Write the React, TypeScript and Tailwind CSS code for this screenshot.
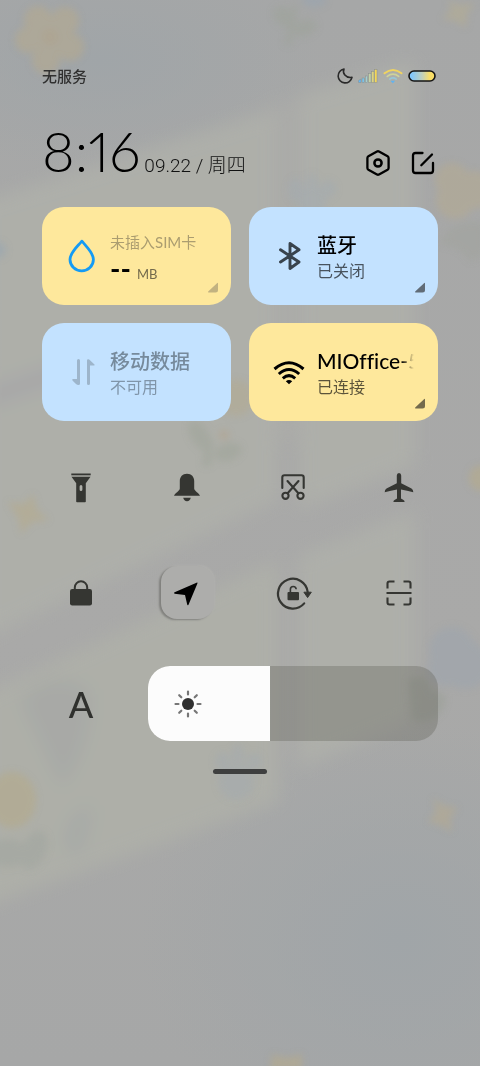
import { useState, type ReactNode } from 'react';
import clsx from 'clsx';

function Wallpaper() {
  return (
    <svg
      className="absolute inset-0 h-full w-full"
      viewBox="0 0 480 1066"
      preserveAspectRatio="xMidYMid slice"
      aria-hidden="true"
    >
      <defs>
        <linearGradient id="wall" x1="0" y1="0" x2="0" y2="1">
          <stop offset="0" stopColor="#a6a7a7" />
          <stop offset="0.6" stopColor="#a9a9a8" />
          <stop offset="1" stopColor="#a6a7a7" />
        </linearGradient>
        <radialGradient id="cool">
          <stop offset="0" stopColor="#a0a5a8" />
          <stop offset="1" stopColor="#a0a5a8" stopOpacity="0" />
        </radialGradient>
        <filter id="soft" x="-20%" y="-20%" width="140%" height="140%">
          <feGaussianBlur stdDeviation="9" />
        </filter>
        <filter id="petal" x="-30%" y="-30%" width="160%" height="160%">
          <feGaussianBlur stdDeviation="3.5" />
        </filter>
      </defs>
      <rect width="480" height="1066" fill="url(#wall)" />
      <ellipse cx="100" cy="60" rx="220" ry="110" fill="url(#cool)" />
      <ellipse cx="400" cy="940" rx="260" ry="220" fill="url(#cool)" />

      {/* window light with the frame's shadow across it */}
      <g filter="url(#soft)" opacity="0.9">
        <path d="M-20 202 L278 108 V500 L-20 640Z" fill="#afb0aa" />
        <path d="M298 95 L415 60 V465 L298 510Z" fill="#afb0aa" />
        <path d="M270 100 H306 V440 H270Z" fill="#adaea9" opacity="0.5" />
        <path d="M-20 695 L278 560 V802 L-20 908Z" fill="#afb0a9" />
        <path d="M298 556 L415 510 V720 L298 768Z" fill="#afb0aa" />
        <path d="M-20 400 L140 345" stroke="#a9a9a9" strokeWidth="22" />
        <path d="M20 700 Q50 665 90 690 Q95 740 62 788Z" fill="#a8aaa6" />
        <path d="M65 850 Q60 815 92 804 Q92 835 78 858Z" fill="#a8aba7" />
      </g>

      <g filter="url(#petal)" opacity="0.8">
        <g fill="#b3aa92" opacity="0.85">
          <circle cx="38" cy="20" r="14" />
          <circle cx="65" cy="21" r="14" />
          <circle cx="70" cy="47" r="14" />
          <circle cx="46" cy="60" r="14" />
          <circle cx="28" cy="40" r="13" />
          <circle cx="50" cy="37" r="14" />
        </g>
        <circle cx="50" cy="37" r="7" fill="#b1a188" opacity="0.6" />
        <g fill="#9fa49b" opacity="0.8">
          <ellipse cx="285" cy="17" rx="13" ry="9" transform="rotate(35 285 17)" />
          <ellipse cx="305" cy="28" rx="12" ry="8" transform="rotate(-20 305 28)" />
          <path d="M293 5h5l-6 40h-8Z" />
        </g>
        <ellipse cx="314" cy="0" rx="12" ry="7" fill="#9ca5ae" />
        <path d="M448 0 L460 5 L475 3 L467 14 L466 28 L456 21 L442 19 L451 10Z" fill="#b0ab98" />
        <g fill="#a4abb1" opacity="0.7">
          <ellipse cx="296" cy="190" rx="8" ry="12" />
          <ellipse cx="312" cy="186" rx="6" ry="12" />
          <ellipse cx="328" cy="189" rx="8" ry="9" />
          <circle cx="312" cy="202" r="14" />
        </g>
        <g fill="#b3aa94" opacity="0.8">
          <circle cx="452" cy="180" r="17" />
          <circle cx="455" cy="200" r="19" />
          <circle cx="474" cy="190" r="19" />
        </g>
        <path d="M470 222 Q445 225 440 245 Q460 245 470 262 L484 255 V222Z" fill="#a0a49c" opacity="0.6" />
        <circle cx="-2" cy="250" r="8" fill="#9da8af" />
        <circle cx="236" cy="398" r="18" fill="#b2a992" opacity="0.7" />
        <g fill="#a1a59c" opacity="0.8">
          <ellipse cx="200" cy="436" rx="9" ry="17" transform="rotate(-32 200 436)" />
          <ellipse cx="228" cy="452" rx="14" ry="9" transform="rotate(-18 228 452)" />
          <path d="M206 440h8l-3 26h-9Z" />
        </g>
        <circle cx="224" cy="435" r="5" fill="#b4a38b" opacity="0.7" />
        <path d="M8 502 L24 504 L33 494 L37 510 L49 520 L32 522 L21 534 L19 520Z" fill="#b3ac94" />
        <circle cx="482" cy="478" r="13" fill="#b2aa92" />
        <g fill="#a0a6ac">
          <circle cx="452" cy="650" r="23" />
          <circle cx="465" cy="665" r="24" />
          <circle cx="446" cy="668" r="18" />
        </g>
        <path d="M408 680 Q426 670 432 692 Q450 690 444 706 Q436 726 412 720Z" fill="#9ca099" opacity="0.8" />
        <g fill="#a5acae" opacity="0.8">
          <ellipse cx="238" cy="756" rx="6" ry="12" />
          <ellipse cx="223" cy="762" rx="8" ry="10" />
          <ellipse cx="254" cy="762" rx="8" ry="9" />
          <circle cx="236" cy="782" r="18" />
        </g>
        <ellipse cx="12" cy="800" rx="24" ry="28" fill="#b2ab92" />
        <g fill="#a4a8a2">
          <ellipse cx="8" cy="853" rx="20" ry="14" />
          <ellipse cx="34" cy="850" rx="12" ry="20" transform="rotate(25 34 850)" />
        </g>
        <path d="M433 798 L443 805 L458 808 L450 818 L452 832 L440 825 L428 822 L436 812Z" fill="#b0a996" />
        <path d="M270 1070 L272 1054 L286 1058 L302 1054 V1070Z" fill="#b1a992" />
      </g>
    </svg>
  );
}

function StatusBar() {
  return (
    <div className="flex h-6 items-center justify-between">
      <span className="text-[15px] font-medium leading-6 text-[#303030]">无服务</span>
      <div className="flex items-center gap-[5px] pr-0.5">
        <svg className="h-4 w-4" viewBox="0 0 16 16" fill="none" aria-label="勿扰">
          <path
            d="M7 1C5.2 5 8.4 10.4 15 9.4A7 7 0 1 1 7 1Z"
            stroke="#2a2a2a"
            strokeWidth="1.6"
            strokeLinejoin="round"
          />
        </svg>
        <svg className="h-4 w-5" viewBox="0 0 20 16" strokeWidth="0.5" stroke="#888d8c" aria-label="信号">
          <path d="M0.5 14.5V12.5L3 11v3.5Z" fill="#64b9f4" />
          <rect x="4" y="10" width="2.4" height="4.5" fill="#7cc2e6" />
          <rect x="7.3" y="8" width="2.4" height="6.5" fill="#a5cdcf" />
          <rect x="10.6" y="5.5" width="2.4" height="9" fill="#c4d3a8" />
          <rect x="13.6" y="3.5" width="2.4" height="11" fill="#dcd482" />
          <rect x="16.6" y="1.5" width="2.4" height="13" fill="#f5d758" />
        </svg>
        <svg className="h-4 w-5" viewBox="0 0 20 16" fill="none" strokeLinecap="round" aria-label="WLAN">
          <path d="M1.5 5.3Q10 -1.5 18.5 5.3" stroke="#f1d45f" strokeWidth="1.9" />
          <path d="M4.3 8.4Q10 4 15.7 8.4" stroke="#cfd39a" strokeWidth="1.7" />
          <path d="M6.8 11.1Q10 8.7 13.2 11.1" stroke="#98c7d6" strokeWidth="1.7" />
          <path d="M8.6 13.2h2.8L10 14.5Z" fill="#5eb4f3" stroke="#5eb4f3" />
        </svg>
        <svg className="h-3 w-7" viewBox="0 0 28 12" aria-label="电量">
          <defs>
            <linearGradient id="battery">
              <stop offset="0.1" stopColor="#82c7fb" />
              <stop offset="0.5" stopColor="#c0d0bd" />
              <stop offset="0.8" stopColor="#f9dd67" />
            </linearGradient>
          </defs>
          <rect x="1" y="1" width="26" height="10" rx="5" fill="url(#battery)" stroke="#151515" strokeWidth="1.6" />
        </svg>
      </div>
    </div>
  );
}

function Header() {
  return (
    <header className="flex items-end justify-between">
      <div className="flex items-baseline gap-1">
        <h1 className="font-[Lato,sans-serif] text-[56px] font-light leading-[54px] text-black proportional-nums">
          8:16
        </h1>
        <span className="text-[19px] font-light leading-6 text-[#111] font-[Roboto,'Noto_Sans_CJK_SC',sans-serif]">
          09.22 / 周四
        </span>
      </div>
      <div className="flex gap-[18px] pb-px text-black">
        <button type="button" aria-label="设置">
          <svg className="h-7 w-7" viewBox="0 0 28 28" fill="none" stroke="currentColor" strokeWidth="2.3">
            <path
              d="M13 2.5Q14 2 15 2.5L23.6 7.3Q24.6 7.9 24.6 9V19Q24.6 20.1 23.6 20.7L15 25.5Q14 26 13 25.5L4.4 20.7Q3.4 20.1 3.4 19V9Q3.4 7.9 4.400 7.300Z"
              strokeLinejoin="round"
            />
            <circle cx="14" cy="14" r="3.6" strokeWidth="2.5" />
          </svg>
        </button>
        <button type="button" aria-label="编辑">
          <svg className="h-7 w-7" viewBox="0 0 28 28" fill="none" stroke="currentColor" strokeWidth="2.3" strokeLinecap="round">
            <path d="M12.500 4H5.500Q3 4 3 6.500V21.500Q3 24 5.500 24H20.500Q23 24 23 21.500V14" />
            <path d="M11.300 16.200L22 5.500" />
          </svg>
        </button>
      </div>
    </header>
  );
}

interface TileProps {
  tone: 'yellow' | 'blue';
  icon: ReactNode;
  children: ReactNode;
  corner?: string;
  disabled?: boolean;
}

function Tile({ tone, icon, children, corner, disabled }: TileProps) {
  return (
    <button
      type="button"
      disabled={disabled}
      className={clsx(
        'relative flex h-[98px] min-w-0 items-center gap-3 rounded-[22px] pl-6 pr-2 text-left',
        tone === 'yellow' ? 'bg-[#fee89c]' : 'bg-[#c3e2ff]',
      )}
    >
      <span className="flex w-8 shrink-0 justify-center">{icon}</span>
      <span className="flex min-w-0 flex-1 flex-col pt-1">{children}</span>
      {corner && (
        <svg className={clsx('absolute bottom-3 right-3 h-3 w-3', corner)} viewBox="0 0 12 12" aria-hidden="true">
          <path d="M1.800 11.500H8.500Q11 11.500 11 9V2.600Q11 1.200 10 2.200L1.200 10.500Q0.500 11.500 1.800 11.500Z" fill="currentColor" />
        </svg>
      )}
    </button>
  );
}

function Tiles() {
  return (
    <div className="grid grid-cols-2 gap-[18px]">
      <Tile
        tone="yellow"
        corner="text-[#c2b280]"
        icon={
          <svg className="h-9 w-8" viewBox="0 0 32 36" fill="none" stroke="#149bf5" strokeWidth="2.8">
            <path d="M15.5 3.5C12 8 4 14.500 4 21.500A11.700 11.400 0 0 0 27.400 21.500C27.400 14.500 19.500 8 16.300 3.500Q15.900 3 15.500 3.500Z" />
          </svg>
        }
      >
        <span className="text-[15px] leading-[26px] whitespace-nowrap text-[#ab9d70]">未插入SIM卡</span>
        <span className="flex items-baseline gap-1.5 leading-[26px]">
          <span className="text-[28px] font-bold text-black">--</span>
          <span className="text-[13px] text-[#736a4c]">MB</span>
        </span>
      </Tile>

      <Tile
        tone="blue"
        corner="text-[#616c77]"
        icon={
          <svg className="h-8 w-8" viewBox="0 0 32 32" fill="none" stroke="#38434d" strokeWidth="2.9" strokeLinejoin="round" strokeLinecap="round">
            <path d="M7.500 9.800L26 22L17 28.500V3.500L26 9.800L7.500 22" />
          </svg>
        }
      >
        <span className="text-[20px] leading-[26px] font-medium text-black">蓝牙</span>
        <span className="text-[16px] leading-[26px] text-[#48535e]">已关闭</span>
      </Tile>

      <Tile
        tone="blue"
        disabled
        icon={
          <svg className="h-8 w-8" viewBox="0 0 32 32" fill="#9db5cb" aria-hidden="true">
            <path d="M11 4.500Q11 3 12.500 3T14 4.500V27.500Q14 29 12.500 29Q11 29 10 28L6.500 24.500Q5.500 23 7 23H11Z" />
            <path d="M24 27.500Q24 29 22.500 29T21 27.500V4.500Q21 3 22.500 3.300Q23.500 3.500 24.500 4.800L28.500 8.500Q29 9.500 28 9.500H24Z" />
          </svg>
        }
      >
        <span className="text-[20px] leading-[26px] font-medium text-[#768a9c]">移动数据</span>
        <span className="text-[16px] leading-[26px] text-[#8095a9]">不可用</span>
      </Tile>

      <Tile
        tone="yellow"
        corner="text-[#736a4c]"
        icon={
          <svg className="h-8 w-8" viewBox="0 0 32 32" fill="none" stroke="#000" strokeWidth="3">
            <path d="M1.500 13Q16 0.500 30.500 13" />
            <path d="M5.800 18Q16 9 26.200 18" />
            <path d="M9.800 22.300Q16 17 22.200 22.300" />
            <path d="M12.800 25.200Q16 22.800 19.200 25.200L16 28.300Z" fill="#000" stroke="none" />
          </svg>
        }
      >
        <span className="w-max whitespace-nowrap text-[21px] leading-[26px] font-medium text-black [font-variant-ligatures:none] mask-[linear-gradient(to_right,#000_82%,transparent_94%)]">
          MIOffice-5
        </span>
        <span className="text-[16px] leading-[26px] text-[#5c543a]">已连接</span>
      </Tile>
    </div>
  );
}

const toggles = [
  {
    label: '手电筒',
    icon: (
      <g fill="currentColor">
        <rect x="8.3" y="3.5" width="19.4" height="1.8" />
        <path
          d="M8.500 6.800H27.500L22.800 13.200V31.500Q22.800 32.300 22 32.300H14Q13.200 32.300 13.200 31.500V13.200ZM18 15Q16.600 15 16.600 16.500V19.500Q16.600 21 18 21T19.400 19.500V16.500Q19.400 15 18 15Z"
          fillRule="evenodd"
        />
      </g>
    ),
  },
  {
    label: '静音',
    icon: (
      <g fill="currentColor">
        <path d="M18 3.700C13.500 3.700 10.800 6.800 10.800 11V18.500C10.800 20.800 5.500 23.500 5 25.800H31C30.500 23.500 25.200 20.800 25.200 18.500V11C25.200 6.800 22.500 3.700 18 3.700Z" />
        <path d="M14.200 27.800H21.800Q21 31.200 18 31.200T14.200 27.800Z" />
      </g>
    ),
  },
  {
    label: '截屏',
    icon: (
      <g fill="none" stroke="currentColor" strokeWidth="2.1" strokeLinecap="round">
        <path d="M7.300 18V7.500Q7.300 5.300 9.500 5.300H26.500Q28.700 5.300 28.700 7.500V18" />
        <path d="M12.500 11L23.400 23.300M23.500 11L12.600 23.300" />
        <circle cx="10.5" cy="25.8" r="3.1" />
        <circle cx="25.5" cy="25.8" r="3.1" />
      </g>
    ),
  },
  {
    label: '飞行模式',
    icon: (
      <path
        d="M18 3Q20.200 3 20.200 5.500V13.200L30.500 18.500Q32.300 19.500 32.300 22.200Q26 20.500 20 19.500V28.500L22.500 30Q23.600 30.600 23.600 32H12.400Q12.400 30.600 13.500 30L16 28.500V19.500Q10 20.500 3.700 22.200Q3.700 19.500 5.500 18.500L15.800 13.200V5.500Q15.800 3 18 3Z"
        fill="currentColor"
      />
    ),
  },
  {
    label: '锁屏',
    icon: (
      <g>
        <rect x="7" y="14" width="22" height="16.5" rx="2.2" fill="currentColor" />
        <path d="M11.800 15V12.500A6.200 6.200 0 0 1 24.200 12.500V15" fill="none" stroke="currentColor" strokeWidth="2" />
      </g>
    ),
  },
  {
    label: '位置',
    active: true,
    icon: (
      <path
        d="M27.500 7.700Q29 7.200 28.300 8.800L19.500 29.700Q18.600 31 18.200 29.500L16 20L5.700 18.800Q4.200 18.100 5.600 17.300Z"
        fill="#000"
      />
    ),
  },
  {
    label: '自动旋转',
    icon: (
      <g fill="none" stroke="currentColor">
        <path d="M29.200 28.400A14.900 14.900 0 1 1 32.700 17" strokeWidth="2.2" strokeLinecap="round" />
        <path d="M28.900 17.200H36.300L32.600 22.600Z" fill="currentColor" strokeLinejoin="round" />
        <rect x="12.5" y="17" width="11.5" height="8.2" rx="1" fill="currentColor" stroke="none" />
        <path d="M15.400 17.500V14.300Q15.400 11.500 18.200 11.500T21.200 14.300" strokeWidth="1.6" />
      </g>
    ),
  },
  {
    label: '扫一扫',
    icon: (
      <path
        d="M6.500 13.500V8.500Q6.500 6.500 8.500 6.500H13.500M22.500 6.500H27.500Q29.500 6.500 29.500 8.500V13.500M29.500 22.500V27.500Q29.500 29.500 27.500 29.500H22.500M13.500 29.500H8.500Q6.500 29.500 6.500 27.500V22.500M5.500 18H30.500"
        fill="none"
        stroke="currentColor"
        strokeWidth="2.1"
      />
    ),
  },
];

function Toggles() {
  return (
    <div className="grid grid-cols-4 gap-x-7 gap-y-[52px] text-[#353632]">
      {toggles.map(({ label, active, icon }) => (
        <div key={label} className="flex justify-center">
          <button
            type="button"
            aria-label={label}
            aria-pressed={Boolean(active)}
            className={clsx(
              'flex h-[53px] w-[53px] items-center justify-center rounded-2xl',
              active && 'bg-[#adadab] shadow-[-2px_1px_2px_#80807d,1px_-1px_2px_#b0b0ae]',
            )}
          >
            <svg className="h-9 w-9 overflow-visible" viewBox="0 0 36 36">
              {icon}
            </svg>
          </button>
        </div>
      ))}
    </div>
  );
}

function Brightness() {
  const [level, setLevel] = useState(42);

  return (
    <div className="grid grid-cols-4 items-center gap-x-7">
      <button type="button" aria-label="自动亮度" className="flex justify-center">
        <span className="font-[Lato,sans-serif] text-[36px] font-medium leading-9 text-[#30312e]">A</span>
      </button>
      <div className="relative col-span-3 h-[75px] overflow-hidden rounded-[22px] bg-[#5a5a50]/30">
        <div className="h-full bg-[#fcfcfc]" style={{ width: `${level}%` }} />
        <svg className="absolute left-[26px] top-6 h-7 w-7" viewBox="0 0 28 28" aria-hidden="true">
          <circle cx="14" cy="14" r="6" fill="#303030" />
          <path
            d="M14 1.500V4.500M14 23.500V26.500M1.500 14H4.500M23.500 14H26.500M5.200 5.200L7.300 7.300M20.700 20.700L22.800 22.800M5.200 22.800L7.300 20.700M20.700 7.300L22.800 5.200"
            stroke="#767676"
            strokeWidth="2.2"
            strokeLinecap="round"
          />
        </svg>
        <input
          type="range"
          aria-label="亮度"
          min={0}
          max={100}
          value={level}
          onChange={(e) => setLevel(Number(e.target.value))}
          className="absolute inset-0 h-full w-full cursor-pointer opacity-0"
        />
      </div>
    </div>
  );
}

export default function App() {
  return (
    <main className="relative min-h-screen overflow-hidden bg-[#a9a9a8] font-[Lato,'Noto_Sans_CJK_SC',sans-serif]">
      <Wallpaper />
      <div className="relative flex flex-col px-[42px] pt-16">
        <StatusBar />
        <div className="pt-9">
          <Header />
        </div>
        <div className="pt-[29px]">
          <Tiles />
        </div>
        <div className="pt-10">
          <Toggles />
        </div>
        <div className="pt-[47px]">
          <Brightness />
        </div>
        <div className="mt-7 h-[5px] w-[54px] self-center rounded-full bg-[#3e3f3f]" />
      </div>
    </main>
  );
}
